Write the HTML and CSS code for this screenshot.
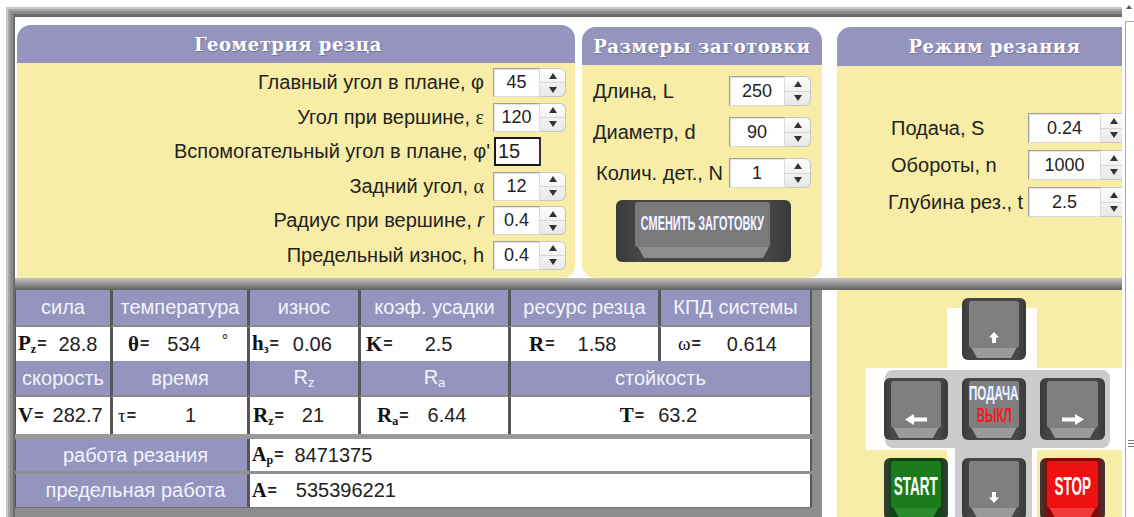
FILE: index.html
```html
<!DOCTYPE html>
<html lang="ru">
<head>
<meta charset="utf-8">
<title>Токарная обработка — расчёт режима резания</title>
<link rel="stylesheet" href="styles.css">
</head>
<body>
<div class="screen">
  <div class="viewport">
    <div class="frame">
      <div class="top">
        <!-- cutter geometry -->
        <section class="panel geo">
          <h2 class="head">Геометрия резца</h2>
          <div class="body geo-body">
            <div class="lbl">Главный угол в плане, φ</div>
            <div class="spin"><span class="fld">45</span><span class="arr"><i class="up"></i><i class="dn"></i></span></div>
            <div class="lbl">Угол при вершине, <span class="gr">ε</span></div>
            <div class="spin"><span class="fld">120</span><span class="arr"><i class="up"></i><i class="dn"></i></span></div>
            <div class="lbl lbl-wide">Вспомогательный угол в плане, φ'</div>
            <div class="plain">15</div>
            <div class="lbl">Задний угол, <span class="gr">α</span></div>
            <div class="spin"><span class="fld">12</span><span class="arr"><i class="up"></i><i class="dn"></i></span></div>
            <div class="lbl">Радиус при вершине, <i>r</i></div>
            <div class="spin"><span class="fld">0.4</span><span class="arr"><i class="up"></i><i class="dn"></i></span></div>
            <div class="lbl">Предельный износ, h</div>
            <div class="spin"><span class="fld">0.4</span><span class="arr"><i class="up"></i><i class="dn"></i></span></div>
          </div>
        </section>

        <!-- blank size -->
        <section class="panel mid">
          <h2 class="head">Размеры заготовки</h2>
          <div class="body mid-body">
            <div class="lbl-l">Длина, L</div>
            <div class="spin spin-m"><span class="fld">250</span><span class="arr"><i class="up"></i><i class="dn"></i></span></div>
            <div class="lbl-l">Диаметр, d</div>
            <div class="spin spin-m"><span class="fld">90</span><span class="arr"><i class="up"></i><i class="dn"></i></span></div>
            <div class="lbl-l lbl-n">Колич. дет., N</div>
            <div class="spin spin-m"><span class="fld">1</span><span class="arr"><i class="up"></i><i class="dn"></i></span></div>
            <div class="key swap"><div class="cap cap-top"><span class="cond swap-txt">СМЕНИТЬ ЗАГОТОВКУ</span></div></div>
          </div>
        </section>

        <!-- cutting mode -->
        <section class="panel mode">
          <h2 class="head head-mode">Режим резания</h2>
          <div class="body mode-body">
            <div class="lbl-l">Подача, S</div>
            <div class="spin spin-r"><span class="fld">0.24</span><span class="arr"><i class="up"></i><i class="dn"></i></span></div>
            <div class="lbl-l">Обороты, n</div>
            <div class="spin spin-r"><span class="fld">1000</span><span class="arr"><i class="up"></i><i class="dn"></i></span></div>
            <div class="lbl-l lbl-t">Глубина рез., t</div>
            <div class="spin spin-r"><span class="fld">2.5</span><span class="arr"><i class="up"></i><i class="dn"></i></span></div>
          </div>
        </section>
      </div>

      <div class="hbar"></div>

      <div class="bottom">
        <div class="results">
          <div class="grid">
            <div class="h"><span>сила</span></div>
            <div class="h"><span>температура</span></div>
            <div class="h"><span>износ</span></div>
            <div class="h"><span>коэф. усадки</span></div>
            <div class="h"><span>ресурс резца</span></div>
            <div class="h h-last"><span>КПД системы</span></div>

            <div class="v v-pz"><b class="s">P<sub>z</sub></b><span class="eq">=</span><span class="n">28.8</span></div>
            <div class="v v-th"><b class="s">θ</b><span class="eq">=</span><span class="n">534</span><span class="deg">°</span></div>
            <div class="v v-h"><b class="s">h<sub>з</sub></b><span class="eq">=</span><span class="n">0.06</span></div>
            <div class="v v-k"><b class="s">K</b><span class="eq">=</span><span class="n">2.5</span></div>
            <div class="v v-r"><b class="s">R</b><span class="eq">=</span><span class="n">1.58</span></div>
            <div class="v v-w h-last"><span class="s s-reg">ω</span><span class="eq">=</span><span class="n">0.614</span></div>

            <div class="h"><span>скорость</span></div>
            <div class="h"><span>время</span></div>
            <div class="h"><span>R<sub>z</sub></span></div>
            <div class="h"><span>R<sub>a</sub></span></div>
            <div class="h h-span h-last"><span>стойкость</span></div>

            <div class="v v-v"><b class="s">V</b><span class="eq">=</span><span class="n">282.7</span></div>
            <div class="v v-t"><span class="s s-reg">τ</span><span class="eq">=</span><span class="n">1</span></div>
            <div class="v v-rz"><b class="s">R<sub>z</sub></b><span class="eq">=</span><span class="n">21</span></div>
            <div class="v v-ra"><b class="s">R<sub>a</sub></b><span class="eq">=</span><span class="n">6.44</span></div>
            <div class="v v-T h-span h-last"><b class="s">T</b><span class="eq">=</span><span class="n">63.2</span></div>
          </div>
          <div class="work">
            <div class="wl">работа резания</div>
            <div class="wv"><b class="s">A<sub>p</sub></b><span class="eq">=</span><span class="n">8471375</span></div>
            <div class="wl">предельная работа</div>
            <div class="wv"><b class="s">A</b><span class="eq">=</span><span class="n n-a">535396221</span></div>
          </div>
        </div>

        <!-- feed control pad -->
        <div class="pad">
          <div class="bd bd-wv"></div>
          <div class="bd bd-wh"></div>
          <div class="bd bd-gh"></div>
          <div class="bd bd-gv"></div>
          <div class="keys">
            <div class="key k-up"><div class="cap"><svg width="10" height="11" viewBox="0 0 10 11"><path d="M5 0 L10 5.5 H7 V11 H3 V5.5 H0 Z" fill="#fff"/></svg></div></div>
            <div class="key k-left"><div class="cap"><svg width="22" height="11" viewBox="0 0 22 11"><path d="M0 5.5 L9 0 V3.5 H22 V7.5 H9 V11 Z" fill="#fff"/></svg></div></div>
            <div class="key k-mid"><div class="cap cap-mid"><span class="cond feed">ПОДАЧА</span><span class="cond off">ВЫКЛ</span></div></div>
            <div class="key k-right"><div class="cap"><svg width="22" height="11" viewBox="0 0 22 11"><path d="M22 5.5 L13 0 V3.5 H0 V7.5 H13 V11 Z" fill="#fff"/></svg></div></div>
            <div class="key k-start"><div class="cap cap-mid"><span class="cond big">START</span></div></div>
            <div class="key k-down"><div class="cap"><svg width="10" height="11" viewBox="0 0 10 11"><path d="M5 11 L10 5.5 H7 V0 H3 V5.5 H0 Z" fill="#fff"/></svg></div></div>
            <div class="key k-stop"><div class="cap cap-mid"><span class="cond big">STOP</span></div></div>
          </div>
        </div>
      </div>
    </div>
  </div>

  <div class="scroll">
    <span class="scroll-up"></span>
    <div class="scroll-thumb"><span class="grip"></span></div>
  </div>
</div>
</body>
</html>
```

FILE: styles.css
```css
* { box-sizing: border-box; }

body {
  margin: 0;
  background: #fff;
  font-family: "Liberation Sans", Arial, sans-serif;
  color: #222;
}

.screen {
  display: flex;
  width: 1134px;
  height: 517px;
  overflow: hidden;
}

.viewport {
  flex: none;
  width: 1122px;
  height: 517px;
  overflow: hidden;
}

/* bevelled grey frame round the whole calculator */
.frame {
  margin: 7px 0 0 6px;
  width: 1150px;
  padding: 10px 0 0 9px;
  background: #fff;
  box-shadow:
    inset 2px 2px 0 #c8c8c8,
    inset 4px 4px 0 #a6a6a6,
    inset 7px 7px 0 #8c8c8c,
    inset 9px 10px 0 #6b6b6b;
}

/* ---------- upper row of input panels ---------- */
.top {
  display: flex;
  align-items: flex-start;
  height: 261px;
}

.panel {
  display: flex;
  flex-direction: column;
  flex: none;
}

.head {
  margin: 0;
  height: 38px;
  background: #9494bf;
  border-radius: 14px 14px 0 0;
  color: #fff;
  font: bold 18px "DejaVu Serif", "Liberation Serif", serif;
  letter-spacing: 0.5px;
  display: flex;
  align-items: center;
  justify-content: center;
  text-shadow: 1px 1px 1px rgba(70, 70, 120, 0.45);
}

.body {
  flex: 1;
  background: #f8eda6;
}

.geo { margin: 8px 0 0 2px; width: 558px; height: 253px; }
.geo .head { padding-right: 16px; }
.geo-body {
  border-radius: 0 0 12px 0;
  padding-top: 5px;
  display: grid;
  grid-template-columns: 474px auto;
  grid-auto-rows: 29px;
  row-gap: 5.5px;
  align-content: start;
}

.mid { margin: 10px 0 0 7px; width: 240px; height: 251px; }
.mid-body {
  border-radius: 0 0 14px 14px;
  padding: 11px 0 0 11px;
  display: grid;
  grid-template-columns: 134px auto;
  grid-auto-rows: 30px;
  row-gap: 11px;
  align-content: start;
}

.mode { margin: 10px 0 0 15px; width: 315px; height: 251px; }
.head-mode { height: 39px; border-radius: 14px 0 0 0; }
.mode-body {
  padding: 47px 0 0 54px;
  display: grid;
  grid-template-columns: 137px auto;
  grid-auto-rows: 30px;
  row-gap: 7px;
  align-content: start;
}

.lbl {
  font-size: 20px;
  text-align: right;
  padding-right: 7px;
  line-height: 29px;
  white-space: nowrap;
}
.lbl-wide { padding-right: 1px; }
.lbl-l {
  font-size: 20px;
  line-height: 30px;
  white-space: nowrap;
}
.lbl-n { padding-left: 3px; }
.lbl-t { margin-left: -3px; }
.gr { font-family: "Liberation Serif", serif; }

/* number field with stepper */
.spin {
  display: flex;
  margin-left: 2px;
}
.fld {
  width: 47px;
  background: #fff;
  border: 1px solid;
  border-color: #a0a0a0 #dcdcdc #dcdcdc #a0a0a0;
  box-shadow: inset 1px 1px 1px #e2e2e2;
  font-size: 18px;
  display: flex;
  align-items: center;
  justify-content: center;
}
.spin-m .fld { width: 56px; }
.spin-r { margin-left: 0; }
.spin-r .fld { width: 73px; }

.arr {
  width: 26px;
  border: 1px solid #c6c6c6;
  border-left: none;
  border-radius: 0 6px 6px 0;
  background: linear-gradient(#fdfdfd, #e8e8e8);
  display: flex;
  flex-direction: column;
}
.arr i {
  flex: 1;
  display: flex;
  align-items: center;
  justify-content: center;
}
.arr i + i { border-top: 1px solid #d6d6d6; }
.arr .up::before {
  content: "";
  border: 4px solid transparent;
  border-top: 0;
  border-bottom: 6px solid #333;
}
.arr .dn::before {
  content: "";
  border: 4px solid transparent;
  border-bottom: 0;
  border-top: 6px solid #333;
}

.plain {
  margin-left: 3px;
  width: 47px;
  height: 29px;
  background: #fff;
  border: 2px solid #1a1a1a;
  border-right-color: #333;
  font-size: 20px;
  line-height: 25px;
  padding-left: 2px;
}

/* ---------- keycap drawing ---------- */
.key {
  --edge: #474747;
  --face: #7f7f7f;
  --slab: #9a9a9a;
  position: relative;
  display: flex;
  min-width: 0;
  border-radius: 6px;
  background: linear-gradient(90deg, #3a3a3a, var(--edge) 14%, var(--edge) 86%, #3a3a3a);
  padding: 3px 7px 12px;
}
.key::after {
  content: "";
  position: absolute;
  left: 9px;
  right: 9px;
  bottom: 2px;
  height: 11px;
  background: var(--slab);
  clip-path: polygon(0 0, 100% 0, calc(100% - 6px) 100%, 6px 100%);
}
.cap {
  flex: 1 1 0;
  min-width: 0;
  position: relative;
  z-index: 1;
  background: var(--face);
  border-radius: 3px;
  display: flex;
  flex-direction: column;
  align-items: center;
  justify-content: flex-end;
  padding-bottom: 5px;
}
.cap-mid { justify-content: center; padding-bottom: 0; }
.cap-top { justify-content: center; padding-bottom: 4px; }

.cond {
  display: inline-block;
  white-space: nowrap;
  font-weight: bold;
  color: #fff;
}

.swap {
  grid-column: 1 / -1;
  margin: 1px 0 0 23px;
  width: 175px;
  height: 62px;
  padding: 2px 21px 15px 19px;
  --face: #7a7a7a;
  --slab: #8e8e8e;
}
.swap::after { left: 22px; right: 22px; bottom: 4px; }
.swap-txt {
  font-size: 21px;
  transform: scaleX(0.52);
  color: #f4f4ff;
  text-shadow: -1px 0 0 rgba(120, 140, 255, 0.5);
}

/* ---------- divider ---------- */
.hbar {
  height: 12px;
  background: linear-gradient(#c4c4c4 0, #a8a8a8 25%, #8c8c8c 55%, #6f6f6f 85%, #5e5e5e 100%);
}

/* ---------- lower row ---------- */
.bottom {
  display: flex;
  height: 227px;
}

.results {
  flex: none;
  width: 807px;
  border-right: 10px solid #8d8d8d;
  border-bottom: 9px solid #8d8d8d;
  box-shadow: inset -2px -2px 0 #6e6e6e;
  display: flex;
  flex-direction: column;
  background: #fff;
}

.grid {
  display: grid;
  grid-template-columns: 95px 137px 111px 150px 150px 154px;
  grid-template-rows: 37px 34px 36px 37px;
}

.h, .v {
  border-left: 3px solid #575757;
  white-space: nowrap;
}
.grid > :nth-child(1), .grid > :nth-child(7), .grid > :nth-child(13), .grid > :nth-child(18) { border-left-width: 1px; }
.h-last { border-right: 2px solid #575757; }
.h-span { grid-column: span 2; }

.h {
  background: #9494bf;
  color: #f3f3fb;
  font-size: 20px;
  display: flex;
  align-items: center;
  justify-content: center;
  border-bottom: 2px solid #8a8a8a;
}
.h sub { font-size: 13px; vertical-align: -3px; }

.v {
  background: #fff;
  display: flex;
  align-items: center;
  font-size: 20px;
}
.s {
  font-family: "Liberation Serif", serif;
  font-size: 21px;
  color: #111;
}
.s sub { font-size: 12px; vertical-align: -3px; }
.s-reg { font-weight: normal; font-size: 19px; }
.eq { font-size: 16px; font-weight: bold; margin-left: 1px; }
.n { margin-left: 10px; }

.v-pz { padding-left: 2px; }
.v-pz .n { margin-left: 12px; }
.v-th { padding-left: 15px; }
.v-th .n { margin-left: 18px; }
.deg { font-size: 16px; margin-left: 21px; align-self: flex-start; margin-top: 5px; }
.v-h { padding-left: 2px; }
.v-h .n { margin-left: 14px; }
.v-k { padding-left: 5px; }
.v-k .n { margin-left: 32px; }
.v-r { padding-left: 18px; }
.v-r .n { margin-left: 23px; }
.v-w { padding-left: 17px; }
.v-w .n { margin-left: 26px; }
.v-v { padding-left: 2px; }
.v-v .n { margin-left: 9px; }
.v-t { padding-left: 5px; }
.v-t .n { margin-left: 49px; }
.v-rz { padding-left: 3px; }
.v-rz .n { margin-left: 18px; }
.v-ra { padding-left: 16px; }
.v-ra .n { margin-left: 19px; }
.v-T { justify-content: center; padding-right: 4px; }
.v-T .n { margin-left: 14px; }

.work {
  border-top: 5px solid #9a9a9a;
  display: grid;
  grid-template-columns: 232px 1fr;
  grid-template-rows: 32px 33px;
  row-gap: 3px;
  background: #8f8f8f;
}
.wl {
  background: #9494bf;
  color: #f3f3fb;
  font-size: 20px;
  display: flex;
  align-items: center;
  justify-content: center;
  padding-left: 8px;
  border-left: 1px solid #575757;
}
.wv {
  background: #fff;
  border-left: 3px solid #575757;
  border-right: 2px solid #575757;
  display: flex;
  align-items: center;
  padding-left: 2px;
  font-size: 20px;
}
.wv .s { font-size: 20px; }
.wv .n { margin-left: 11px; }
.wv .n-a { margin-left: 19px; }

/* ---------- feed control pad ---------- */
.pad {
  flex: none;
  margin-left: 15px;
  width: 300px;
  height: 227px;
  background: #f8eda6;
  position: relative;
}
.bd { position: absolute; }
.bd-wv { left: 110px; top: 18px; width: 90px; height: 220px; background: #fff; }
.bd-wh { left: 29px; top: 78px; width: 280px; height: 82px; background: #fff; }
.bd-gh { left: 48px; top: 80px; width: 225px; height: 78px; background: #cbcbcb; border-radius: 8px; }
.bd-gv { left: 118px; top: 150px; width: 77px; height: 90px; background: #cbcbcb; }

.keys {
  position: relative;
  display: grid;
  grid-template-columns: 64px 64px 65px;
  grid-template-rows: 62px 62px 62px;
  column-gap: 14px;
  row-gap: 18px;
  margin: 8px 0 0 47px;
}
.k-up { grid-area: 1 / 2; }
.k-left { grid-area: 2 / 1; }
.k-mid { grid-area: 2 / 2; }
.k-right { grid-area: 2 / 3; }
.k-start { grid-area: 3 / 1; }
.k-down { grid-area: 3 / 2; }
.k-stop { grid-area: 3 / 3; }

.k-left .cap, .k-right .cap { padding-bottom: 3px; }

.feed {
  font-size: 20px;
  transform: scaleX(0.58);
  color: #eef4ff;
  text-shadow: -1px 0 0 rgba(110, 150, 255, 0.7);
  line-height: 21px;
}
.off {
  font-size: 20px;
  transform: scaleX(0.58);
  color: #ee1c24;
  line-height: 22px;
}

.k-start { --edge: #0d4510; --face: #1b7b1d; --slab: #2b8a2b; }
.k-stop { --edge: #860606; --face: #ee1111; --slab: #f23a3a; }
.big {
  font-size: 25px;
  transform: scaleX(0.54);
  margin-top: 4px;
}

/* ---------- window scrollbar ---------- */
.scroll {
  flex: none;
  width: 12px;
  height: 517px;
  background: #fff;
}
.scroll-up {
  display: block;
  width: 0;
  height: 0;
  margin: 5px 0 0 4px;
  border: 3px solid transparent;
  border-top: 0;
  border-bottom: 4px solid #555;
}
.scroll-thumb {
  margin: 12px 0 0 3px;
  height: 500px;
  border-left: 1px solid #a9a9a9;
  border-top: 1px solid #a9a9a9;
  padding-top: 418px;
}
.grip {
  display: block;
  margin-left: 2px;
  width: 6px;
  height: 7px;
  background: repeating-linear-gradient(#777 0 1px, transparent 1px 3px);
}
```
